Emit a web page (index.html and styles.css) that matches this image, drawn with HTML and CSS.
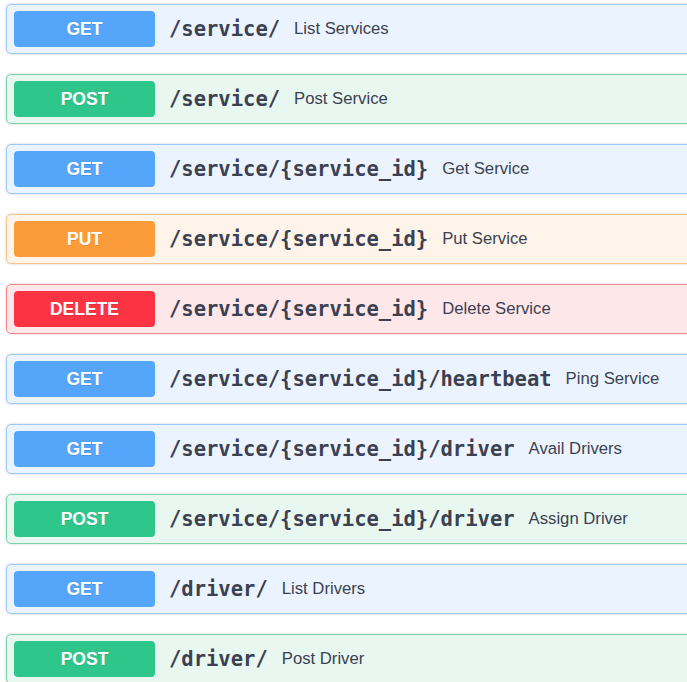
FILE: index.html
```html
<!DOCTYPE html>
<html>
<head>
<meta charset="utf-8">
<link rel="stylesheet" href="styles.css">
</head>
<body>
<div class="ops">
  <div class="op get"><span class="method">GET</span><span class="path">/service/</span><span class="desc">List Services</span></div>
  <div class="op post"><span class="method">POST</span><span class="path">/service/</span><span class="desc">Post Service</span></div>
  <div class="op get"><span class="method">GET</span><span class="path">/service/{service_id}</span><span class="desc">Get Service</span></div>
  <div class="op put"><span class="method">PUT</span><span class="path">/service/{service_id}</span><span class="desc">Put Service</span></div>
  <div class="op delete"><span class="method">DELETE</span><span class="path">/service/{service_id}</span><span class="desc">Delete Service</span></div>
  <div class="op get"><span class="method">GET</span><span class="path">/service/{service_id}/heartbeat</span><span class="desc">Ping Service</span></div>
  <div class="op get"><span class="method">GET</span><span class="path">/service/{service_id}/driver</span><span class="desc">Avail Drivers</span></div>
  <div class="op post"><span class="method">POST</span><span class="path">/service/{service_id}/driver</span><span class="desc">Assign Driver</span></div>
  <div class="op get"><span class="method">GET</span><span class="path">/driver/</span><span class="desc">List Drivers</span></div>
  <div class="op post"><span class="method">POST</span><span class="path">/driver/</span><span class="desc">Post Driver</span></div>
</div>
</body>
</html>
```
FILE: styles.css
```css
html, body {
  margin: 0;
  padding: 0;
  background: #fff;
  overflow: hidden;
}
.ops {
  display: flex;
  flex-direction: column;
  gap: 20px;
  padding: 4px 0 0 6px;
  overflow: hidden;
  height: 678px;
}
.op {
  display: flex;
  align-items: center;
  height: 50px;
  flex: none;
  box-sizing: border-box;
  border: 1px solid;
  border-radius: 5px;
  padding: 0 7px;
  margin-right: -10px;
  box-shadow: 0 0 3px rgba(0, 0, 0, 0.19);
  color: #3b4151;
}
.method {
  width: 141px;
  height: 36px;
  flex: none;
  display: flex;
  align-items: center;
  justify-content: center;
  border-radius: 4px;
  color: #fff;
  font-family: "Liberation Sans", Arial, sans-serif;
  font-weight: 700;
  font-size: 17.5px;
  text-shadow: 0 1px 0 rgba(0, 0, 0, 0.1);
}
.path {
  font-family: "DejaVu Sans Mono", monospace;
  font-weight: 700;
  font-size: 20.5px;
  padding: 0 14px 0 14px;
  white-space: nowrap;
}
.desc {
  font-family: "Liberation Sans", Arial, sans-serif;
  font-size: 16.7px;
  white-space: nowrap;
}
.get { background: #ebf4fe; border-color: #9bcaf9; }
.get .method { background: #55a5fa; }
.post { background: #e8f7f0; border-color: #7ad5ab; }
.post .method { background: #2ec68a; }
.put { background: #fff4ea; border-color: #fbc48a; }
.put .method { background: #fb9b3a; }
.delete { background: #fee7e9; border-color: #f58a90; }
.delete .method { background: #fc3342; }
```
